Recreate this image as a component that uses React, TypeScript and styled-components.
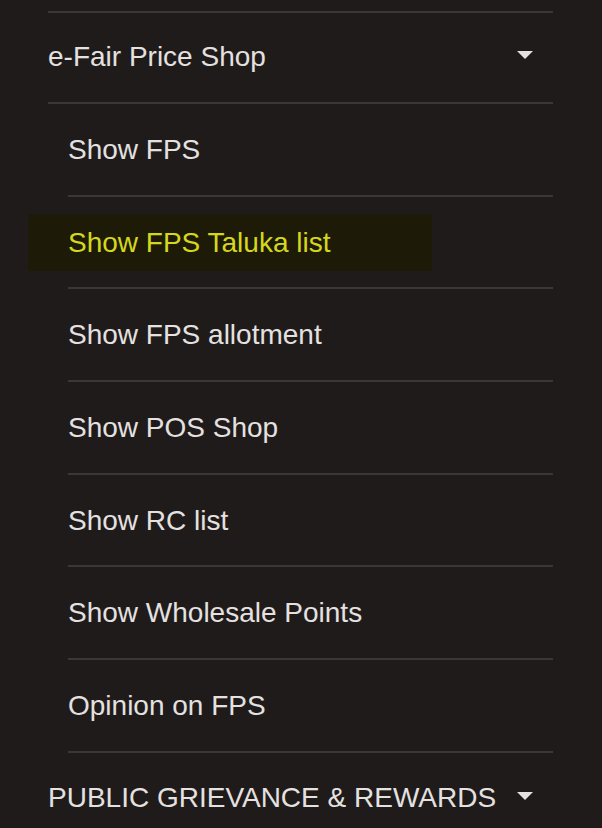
import styled, { createGlobalStyle } from "styled-components";

const GlobalStyle = createGlobalStyle`
  html, body {
    margin: 0;
    padding: 0;
    background: #1f1b1a;
    overflow: hidden;
  }
  body {
    font-family: "Liberation Sans", Arial, sans-serif;
  }
`;

const subItems = [
  "Show FPS",
  "Show FPS Taluka list",
  "Show FPS allotment",
  "Show POS Shop",
  "Show RC list",
  "Show Wholesale Points",
  "Opinion on FPS",
];

function App() {
  return (
    <>
      <GlobalStyle />
      <Menu>
        <Section>
          <Header>
            <HeaderText>e-Fair Price Shop</HeaderText>
            <Caret />
          </Header>
          <SubList>
            {subItems.map((item) => (
              <SubItem key={item}>
                <SubLink $active={item === "Show FPS Taluka list"}>{item}</SubLink>
              </SubItem>
            ))}
          </SubList>
        </Section>
        <Section>
          <Header>
            <HeaderText>PUBLIC GRIEVANCE &amp; REWARDS</HeaderText>
            <Caret />
          </Header>
        </Section>
      </Menu>
    </>
  );
}

const Menu = styled.nav`
  width: 505px;
  margin: 11px 0 0 48px;
  border-top: 2px solid #3a3736;
`;

const Section = styled.div`
  display: flex;
  flex-direction: column;
`;

const Header = styled.div`
  display: flex;
  align-items: center;
  justify-content: space-between;
  height: 91px;
  padding: 0 20px 2px 0;
  box-sizing: border-box;
  border-bottom: 2px solid #3a3736;
  &:last-child {
    border-bottom: none;
    height: 91px;
    padding-bottom: 0;
  }
`;

const HeaderText = styled.span`
  font-size: 28px;
  line-height: 40px;
  color: #e4e1e0;
`;

const Caret = styled.span`
  width: 0;
  height: 0;
  border-left: 8px solid transparent;
  border-right: 8px solid transparent;
  border-top: 8px solid #e4e1e0;
  margin-top: -4px;
`;

const SubList = styled.ul`
  list-style: none;
  margin: 0 0 0 20px;
  padding: 0;
`;

const SubItem = styled.li`
  display: flex;
  align-items: center;
  height: 90.7px;
  border-bottom: 2px solid #3a3736;
`;

const SubLink = styled.a<{ $active?: boolean }>`
  display: inline-block;
  font-size: 28px;
  line-height: 57px;
  margin-left: -40px;
  padding: 0 101px 0 40px;
  color: ${(p) => (p.$active ? "#d5d71d" : "#e4e1e0")};
  background: ${(p) => (p.$active ? "#1d1b07" : "transparent")};
  cursor: pointer;
`;

export default App;
